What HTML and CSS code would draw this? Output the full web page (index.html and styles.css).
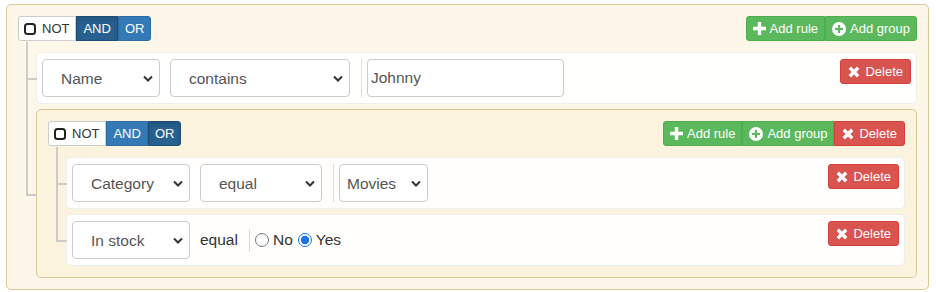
FILE: index.html
```html
<!DOCTYPE html>
<html lang="en">
<head>
    <meta charset="UTF-8">
    <title>Query builder</title>
    <link rel="stylesheet" href="styles.css">
</head>
<body>

<div class="builder">
    <div class="group">
        <div class="group-header">
            <div class="btn-group">
                <button class="btn btn-not"><svg width="12" height="12" viewBox="0 0 12 12"><rect x="1" y="1" width="10" height="10" rx="2.5" fill="none" stroke="#222" stroke-width="2"/></svg>NOT</button>
                <button class="btn btn-primary active">AND</button>
                <button class="btn btn-primary">OR</button>
            </div>
            <div class="btn-group">
                <button class="btn btn-success"><svg width="13" height="13" viewBox="0 0 13 13"><path d="M4.8 0h3.4v4.8H13v3.4H8.2V13H4.8V8.2H0V4.8h4.8z" fill="#fff"/></svg>Add rule</button>
                <button class="btn btn-success"><svg width="14" height="14" viewBox="0 0 14 14"><circle cx="7" cy="7" r="7" fill="#fff"/><path d="M5.9 3h2.2v2.9H11v2.2H8.1V11H5.9V8.1H3V5.9h2.9z" fill="#5cb85c"/></svg>Add group</button>
            </div>
        </div>

        <ul class="rules-list">
            <li class="rule">
                <select class="form-control filter"><option>Name</option></select>
                <select class="form-control operator"><option>contains</option></select>
                <div class="value">
                    <input class="form-control text-value" type="text" value="Johnny">
                </div>
                <button class="btn btn-danger delete"><svg width="12" height="12" viewBox="0 0 12 12"><path d="M1.8 1.8l8.4 8.4M10.2 1.8l-8.4 8.4" stroke="#fff" stroke-width="3.4"/></svg>Delete</button>
            </li>

            <li class="group">
                <div class="group-header">
                    <div class="btn-group">
                        <button class="btn btn-not"><svg width="12" height="12" viewBox="0 0 12 12"><rect x="1" y="1" width="10" height="10" rx="2.5" fill="none" stroke="#222" stroke-width="2"/></svg>NOT</button>
                        <button class="btn btn-primary">AND</button>
                        <button class="btn btn-primary active">OR</button>
                    </div>
                    <div class="btn-group">
                        <button class="btn btn-success"><svg width="13" height="13" viewBox="0 0 13 13"><path d="M4.8 0h3.4v4.8H13v3.4H8.2V13H4.8V8.2H0V4.8h4.8z" fill="#fff"/></svg>Add rule</button>
                        <button class="btn btn-success"><svg width="14" height="14" viewBox="0 0 14 14"><circle cx="7" cy="7" r="7" fill="#fff"/><path d="M5.9 3h2.2v2.9H11v2.2H8.1V11H5.9V8.1H3V5.9h2.9z" fill="#5cb85c"/></svg>Add group</button>
                        <button class="btn btn-danger"><svg width="12" height="12" viewBox="0 0 12 12"><path d="M1.8 1.8l8.4 8.4M10.2 1.8l-8.4 8.4" stroke="#fff" stroke-width="3.4"/></svg>Delete</button>
                    </div>
                </div>

                <ul class="rules-list">
                    <li class="rule">
                        <select class="form-control filter"><option>Category</option></select>
                        <select class="form-control operator short"><option>equal</option></select>
                        <div class="value">
                            <select class="form-control plain"><option>Movies</option></select>
                        </div>
                        <button class="btn btn-danger delete"><svg width="12" height="12" viewBox="0 0 12 12"><path d="M1.8 1.8l8.4 8.4M10.2 1.8l-8.4 8.4" stroke="#fff" stroke-width="3.4"/></svg>Delete</button>
                    </li>
                    <li class="rule">
                        <select class="form-control filter"><option>In stock</option></select>
                        <span class="operator-text">equal</span>
                        <div class="value">
                            <label class="radio"><input type="radio" name="in_stock" value="0">No</label>
                            <label class="radio"><input type="radio" name="in_stock" value="1" checked>Yes</label>
                        </div>
                        <button class="btn btn-danger delete"><svg width="12" height="12" viewBox="0 0 12 12"><path d="M1.8 1.8l8.4 8.4M10.2 1.8l-8.4 8.4" stroke="#fff" stroke-width="3.4"/></svg>Delete</button>
                    </li>
                </ul>
            </li>
        </ul>
    </div>
</div>

</body>
</html>
```

FILE: styles.css
```css
body {
    margin: 0;
    font-family: "Liberation Sans", Arial, sans-serif;
    background-color: #ffffff;
}
.builder {
    padding: 4px 7px 0 6px;
}
.group {
    border: 1px solid #dcc896;
    border-radius: 5px;
    background-color: rgba(250, 240, 210, 0.5);
    padding: 11px;
}
.group-header {
    display: flex;
    justify-content: space-between;
    margin-bottom: 11px;
}

/* buttons */
.btn-group {
    display: flex;
}
.btn {
    display: inline-flex;
    align-items: center;
    gap: 4px;
    height: 25px;
    padding: 0 6px;
    border: 1px solid transparent;
    border-radius: 0;
    font-family: "Liberation Sans", Arial, sans-serif;
    font-size: 13px;
    color: #fff;
    cursor: pointer;
}
.btn-group .btn:first-child {
    border-radius: 3px 0 0 3px;
}
.btn-group .btn:last-child {
    border-radius: 0 3px 3px 0;
}
.btn-not {
    background-color: #fff;
    border-color: #ccc;
    color: #333;
    padding-left: 5px;
    gap: 6px;
}
.btn-primary {
    background-color: #337ab7;
    border-color: #2e6da4;
}
.btn-primary.active {
    background-color: #286090;
    border-color: #204d74;
    box-shadow: inset 0 3px 5px rgba(0, 0, 0, 0.125);
}
.btn-success {
    background-color: #5cb85c;
    border-color: #4cae4c;
}
.btn-danger {
    background-color: #d9534f;
    border-color: #d43f3a;
    padding: 0 7px;
    gap: 5px;
}
.btn-danger.delete {
    border-radius: 3px;
}

/* tree */
.rules-list {
    list-style: none;
    margin: 0;
    padding: 0 0 0 18px;
    display: flex;
    flex-direction: column;
    gap: 5px;
}
.rules-list > li {
    position: relative;
}
.rules-list > li::before {
    content: "";
    position: absolute;
    left: -11px;
    top: -5px;
    width: 11px;
    height: calc(50% + 7px);
    box-sizing: border-box;
    border: 0 solid #ccc;
    border-width: 0 0 2px 2px;
}
.rules-list > li:first-child::before {
    top: -11px;
    height: calc(50% + 13px);
}
.rules-list > li::after {
    content: "";
    position: absolute;
    left: -11px;
    top: 50%;
    height: calc(50% + 5px);
    border-left: 2px solid #ccc;
}
.rules-list > li:last-child::after {
    display: none;
}

/* rules */
.rule {
    display: flex;
    align-items: center;
    padding: 6px 5px;
    border: 1px solid #eee;
    border-radius: 5px;
    background-color: rgba(255, 255, 255, 0.9);
}
.rule .delete {
    margin-left: auto;
    align-self: flex-start;
}
.form-control {
    box-sizing: border-box;
    height: 38px;
    border: 1px solid #ccc;
    border-radius: 4px;
    background-color: #fff;
    font-family: "Liberation Sans", Arial, sans-serif;
    font-size: 15.5px;
    color: #555;
    margin: 0;
}
select.form-control {
    appearance: none;
    padding: 0 24px 0 18px;
    background-image: url("data:image/svg+xml,%3Csvg xmlns='http://www.w3.org/2000/svg' width='10' height='7' viewBox='0 0 10 7'%3E%3Cpath d='M1 1.5l4 4 4-4' fill='none' stroke='%23333' stroke-width='2'/%3E%3C/svg%3E");
    background-repeat: no-repeat;
    background-position: right 6px center;
}
.filter {
    width: 118px;
    margin-right: 10px;
}
.operator {
    width: 180px;
}
.operator.short {
    width: 122px;
}
.operator-text {
    font-size: 15.5px;
    color: #333;
}
.value {
    display: flex;
    align-items: center;
    margin-left: 11px;
    padding-left: 5px;
    border-left: 1px solid #ddd;
}
.text-value {
    width: 197px;
    padding: 0 3px;
}
select.form-control.plain {
    width: 89px;
    padding-left: 7px;
}
.radio {
    display: inline-flex;
    align-items: center;
    font-size: 15.5px;
    color: #333;
    height: 23px;
    margin-right: 5px;
}
.radio input {
    width: 14px;
    height: 14px;
    margin: 0 4px 0 0;
    accent-color: #1a73e8;
}
```
